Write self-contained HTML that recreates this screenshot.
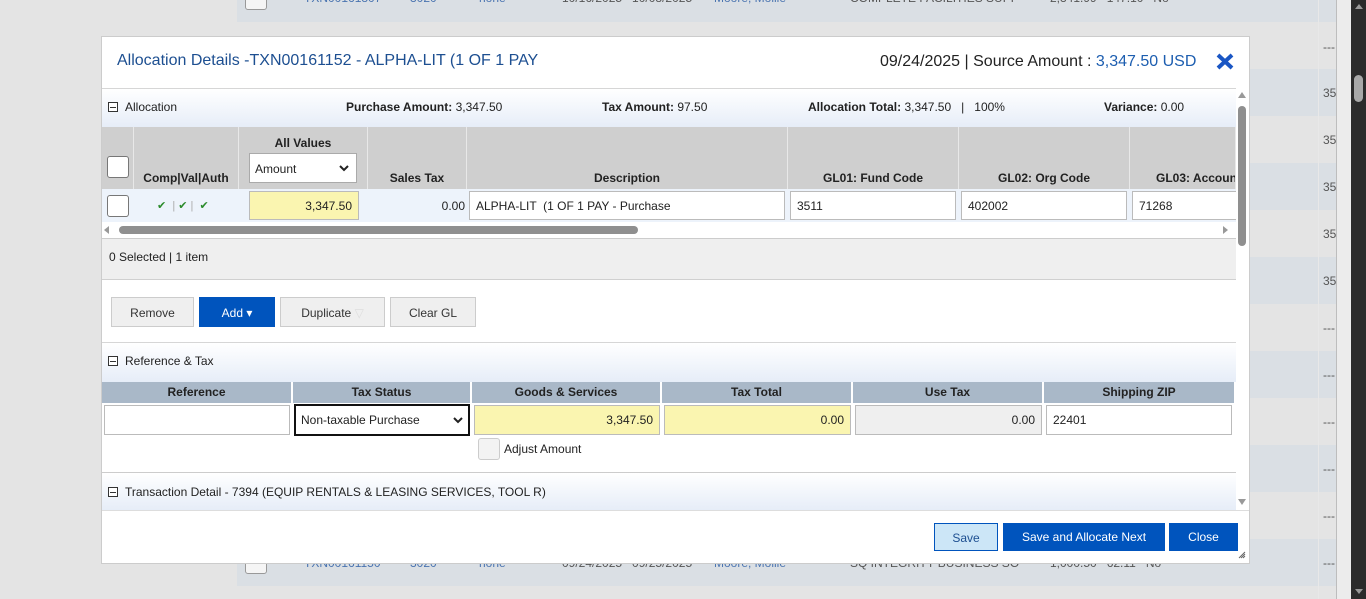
<!DOCTYPE html>
<html><head><meta charset="utf-8"><style>
*{box-sizing:border-box;margin:0;padding:0}
body{width:1366px;height:599px;overflow:hidden;background:#e4e4e4;font-family:"Liberation Sans",Arial,sans-serif;font-size:12px;color:#222;position:relative}
.a{position:absolute}
.row{position:absolute;left:237px;width:1099px;height:47px;background:#dadfe4}
.bgt{position:absolute;font-size:12px;color:#555;white-space:nowrap}
.lnk{color:#4a74b0}
.hdr{background:linear-gradient(#fff,#e6edf8);border-top:1px solid #d6d6d6}
.box{position:absolute;background:#fff;border:1px solid #bbb;height:29px;font-size:12px;padding:7px 6px;white-space:nowrap;overflow:hidden}
.yel{background:#faf5b0;text-align:right}
.th{position:absolute;background:#cfcfcf;font-weight:bold;text-align:center;font-size:12px;border-right:1px solid #e8e8e8}
.th2{position:absolute;top:382px;height:21px;background:#a9b8c8;font-weight:bold;text-align:center;padding-top:3px;border-right:2px solid #fff}
.btn{position:absolute;top:297px;height:30px;border:1px solid #ccc;background:#efefef;text-align:center;padding-top:8px;color:#333}
.minus{position:absolute;width:10px;height:10px;border:1px solid #333;background:#fff}
.minus:after{content:"";position:absolute;left:1px;top:3.5px;width:6px;height:1px;background:#333}
.chev{position:absolute;right:7px;top:11px}
</style></head><body>
<div class="row" style="top:-25px"></div>
<div class="row" style="top:69px"></div>
<div class="row" style="top:163px"></div>
<div class="row" style="top:257px"></div>
<div class="row" style="top:351px"></div>
<div class="row" style="top:445px"></div>
<div class="row" style="top:539px"></div>
<div class="a" style="left:1318px;top:0;width:1px;height:599px;background:#e8e8e8"></div>
<div class="a" style="left:1336px;top:0;width:1px;height:599px;background:#bdbdbd"></div>
<div class="a" style="left:1337px;top:0;width:14px;height:599px;background:#ececec"></div>
<div class="a" style="left:1351px;top:0;width:15px;height:599px;background:#2b2b2b"></div>
<div class="a" style="left:1354px;top:75px;width:9px;height:27px;border-radius:5px;background:#a8a8a8"></div>
<div class="a" style="left:1355px;top:4px;border-left:4px solid transparent;border-right:4px solid transparent;border-bottom:5px solid #999"></div>
<div class="a" style="left:1355px;top:589px;border-left:4px solid transparent;border-right:4px solid transparent;border-top:5px solid #999"></div>
<div class="a" style="left:245px;top:-10px;width:22px;height:20px;border:1px solid #999;border-radius:3px;background:#f5f5f5"></div>
<div class="a" style="left:245px;top:552px;width:22px;height:22px;border:1px solid #999;border-radius:3px;background:#f5f5f5"></div>
<div class="bgt lnk" style="left:304px;top:-9px">TXN00161807</div><div class="bgt lnk" style="left:410px;top:-9px">3020</div><div class="bgt lnk" style="left:479px;top:-9px">none</div><div class="bgt" style="left:562px;top:-9px">10/16/2025 &nbsp; 10/08/2025</div><div class="bgt lnk" style="left:714px;top:-9px">Moore, Mollie</div><div class="bgt" style="left:850px;top:-9px">COMPLETE FACILITIES SUPP</div><div class="bgt" style="left:1050px;top:-9px">2,341.99 &nbsp; 147.10 &nbsp; No</div>
<div class="bgt lnk" style="left:304px;top:556px">TXN00161150</div><div class="bgt lnk" style="left:410px;top:556px">3020</div><div class="bgt lnk" style="left:479px;top:556px">none</div><div class="bgt" style="left:562px;top:556px">09/24/2025 &nbsp; 09/25/2025</div><div class="bgt lnk" style="left:714px;top:556px">Moore, Mollie</div><div class="bgt" style="left:850px;top:556px">SQ INTEGRITY BUSINESS SO</div><div class="bgt" style="left:1050px;top:556px">1,000.50 &nbsp; 62.11 &nbsp; No</div>
<div class="bgt" style="left:1323px;top:40px">---</div>
<div class="bgt" style="left:1323px;top:86px">35</div><div class="bgt" style="left:1323px;top:133px">35</div><div class="bgt" style="left:1323px;top:180px">35</div><div class="bgt" style="left:1323px;top:227px">35</div><div class="bgt" style="left:1323px;top:274px">35</div>
<div class="bgt" style="left:1323px;top:321px">---</div><div class="bgt" style="left:1323px;top:368px">---</div><div class="bgt" style="left:1323px;top:415px">---</div><div class="bgt" style="left:1323px;top:462px">---</div><div class="bgt" style="left:1323px;top:509px">---</div><div class="bgt" style="left:1323px;top:556px">---</div>

<div class="a" style="left:101px;top:36px;width:1149px;height:528px;background:#fff;border:1px solid #ccc"></div>
<div class="a" style="left:117px;top:52px;font-size:16px;color:#1d4f91">Allocation Details -TXN00161152 - ALPHA-LIT (1 OF 1 PAY</div>
<div class="a" style="left:880px;top:53px;font-size:16px;color:#222">09/24/2025 | Source Amount : <span style="color:#1d5eb0">3,347.50 USD</span></div>
<svg class="a" style="left:1216px;top:53px" width="18" height="17" viewBox="0 0 18 17"><path d="M2 2L16 15M16 2L2 15" stroke="#1a56c4" stroke-width="4"/></svg>

<div class="a hdr" style="left:102px;top:88px;width:1134px;height:39px"></div>
<div class="minus" style="left:108px;top:102px"></div>
<div class="a" style="left:125px;top:100px">Allocation</div>
<div class="a" style="left:346px;top:100px"><b>Purchase Amount:</b> 3,347.50</div>
<div class="a" style="left:602px;top:100px"><b>Tax Amount:</b> 97.50</div>
<div class="a" style="left:808px;top:100px"><b>Allocation Total:</b> 3,347.50 &nbsp; | &nbsp; 100%</div>
<div class="a" style="left:1104px;top:100px"><b>Variance:</b> 0.00</div>

<div class="th" style="left:102px;top:127px;width:32px;height:62px"></div>
<div class="a" style="left:107px;top:156px;width:22px;height:22px;border:1px solid #777;border-radius:3px;background:#fff"></div>
<div class="th" style="left:134px;top:127px;width:105px;height:62px;padding-top:44px">Comp|Val|Auth</div>
<div class="th" style="left:239px;top:127px;width:129px;height:62px;padding-top:9px">All Values</div>
<div class="a" style="left:249px;top:153px;width:108px;height:30px;background:#fff;border:1px solid #aaa;padding:8px 5px">Amount<svg class="chev" width="10" height="7"><path d="M1 1L5 5L9 1" stroke="#222" stroke-width="2" fill="none"/></svg></div>
<div class="th" style="left:368px;top:127px;width:99px;height:62px;padding-top:44px">Sales Tax</div>
<div class="th" style="left:467px;top:127px;width:321px;height:62px;padding-top:44px">Description</div>
<div class="th" style="left:788px;top:127px;width:171px;height:62px;padding-top:44px">GL01: Fund Code</div>
<div class="th" style="left:959px;top:127px;width:171px;height:62px;padding-top:44px">GL02: Org Code</div>
<div class="th" style="left:1130px;top:127px;width:106px;height:62px;padding-top:44px;text-align:left;padding-left:26px;white-space:nowrap;overflow:hidden">GL03: Account</div>

<div class="a" style="left:102px;top:189px;width:1134px;height:33px;background:#edf3fb"></div>
<div class="a" style="left:107px;top:195px;width:22px;height:22px;border:1px solid #777;border-radius:3px;background:#fff"></div>
<div class="a" style="left:157px;top:199px;font-size:11px;color:#2a8a2a">✔ <span style="color:#aaa">&nbsp;|</span> ✔ <span style="color:#aaa">|</span> &nbsp;✔</div>
<div class="box yel" style="left:249px;top:191px;width:110px">3,347.50</div>
<div class="a" style="left:368px;top:199px;width:97px;text-align:right">0.00</div>
<div class="box" style="left:469px;top:191px;width:316px">ALPHA-LIT &nbsp;(1 OF 1 PAY - Purchase</div>
<div class="box" style="left:790px;top:191px;width:166px">3511</div>
<div class="box" style="left:961px;top:191px;width:166px">402002</div>
<div class="box" style="left:1132px;top:191px;width:110px;border-right:none">71268</div>
<div class="a" style="left:102px;top:222px;width:1134px;height:16px;background:#fff"></div>
<div class="a" style="left:104px;top:226px;border-top:4px solid transparent;border-bottom:4px solid transparent;border-right:5px solid #999"></div>
<div class="a" style="left:1223px;top:226px;border-top:4px solid transparent;border-bottom:4px solid transparent;border-left:5px solid #999"></div>
<div class="a" style="left:119px;top:226px;width:519px;height:8px;border-radius:4px;background:#8f8f8f"></div>
<div class="a" style="left:102px;top:238px;width:1134px;height:42px;background:#efefef;border-top:1px solid #ccc;border-bottom:1px solid #d0d0d0"></div>
<div class="a" style="left:109px;top:250px">0 Selected | 1 item</div>

<div class="btn" style="left:111px;width:83px">Remove</div>
<div class="btn" style="left:199px;width:76px;background:#0054bd;border-color:#0054bd;color:#fff">Add ▾</div>
<div class="btn" style="left:280px;width:105px">Duplicate <span style="color:#ddd">▽</span></div>
<div class="btn" style="left:390px;width:86px">Clear GL</div>

<div class="a hdr" style="left:102px;top:342px;width:1134px;height:40px"></div>
<div class="minus" style="left:108px;top:356px"></div>
<div class="a" style="left:125px;top:354px">Reference &amp; Tax</div>
<div class="th2" style="left:102px;width:191px">Reference</div>
<div class="th2" style="left:293px;width:179px">Tax Status</div>
<div class="th2" style="left:472px;width:190px">Goods &amp; Services</div>
<div class="th2" style="left:662px;width:191px">Tax Total</div>
<div class="th2" style="left:853px;width:191px">Use Tax</div>
<div class="th2" style="left:1044px;width:192px">Shipping ZIP</div>
<div class="box" style="left:104px;top:405px;width:186px;height:30px"></div>
<div class="box" style="left:294px;top:404px;width:176px;height:32px;border:2px solid #111;padding:7px 5px">Non-taxable Purchase<svg class="chev" width="10" height="7" style="top:11px;right:5px"><path d="M1 1L5 5L9 1" stroke="#222" stroke-width="2" fill="none"/></svg></div>
<div class="box yel" style="left:474px;top:405px;width:186px;height:30px">3,347.50</div>
<div class="box yel" style="left:664px;top:405px;width:187px;height:30px">0.00</div>
<div class="box" style="left:855px;top:405px;width:187px;height:30px;background:#efefef;text-align:right">0.00</div>
<div class="box" style="left:1046px;top:405px;width:186px;height:30px">22401</div>
<div class="a" style="left:478px;top:438px;width:22px;height:22px;border:1px solid #ccc;border-radius:3px;background:#f3f3f3"></div>
<div class="a" style="left:504px;top:442px">Adjust Amount</div>
<div class="a" style="left:102px;top:472px;width:1134px;height:1px;background:#ccc"></div>

<div class="a hdr" style="left:102px;top:473px;width:1134px;height:37px;border-top:none"></div>
<div class="minus" style="left:108px;top:487px"></div>
<div class="a" style="left:125px;top:485px">Transaction Detail - 7394 (EQUIP RENTALS &amp; LEASING SERVICES, TOOL R)</div>

<div class="a" style="left:1236px;top:88px;width:13px;height:422px;background:#fff"></div>
<div class="a" style="left:1238px;top:92px;border-left:4px solid transparent;border-right:4px solid transparent;border-bottom:6px solid #999"></div>
<div class="a" style="left:1238px;top:499px;border-left:4px solid transparent;border-right:4px solid transparent;border-top:6px solid #999"></div>
<div class="a" style="left:1238px;top:106px;width:8px;height:140px;border-radius:4px;background:#8f8f8f"></div>
<div class="a" style="left:102px;top:510px;width:1147px;height:1px;background:#ddd"></div>

<div class="a" style="left:934px;top:523px;width:64px;height:28px;border:1px solid #0054bd;background:#cce6f7;color:#1d4f91;text-align:center;padding-top:7px">Save</div>
<div class="a" style="left:1003px;top:523px;width:162px;height:28px;background:#0054bd;color:#fff;text-align:center;padding-top:7px">Save and Allocate Next</div>
<div class="a" style="left:1169px;top:523px;width:69px;height:28px;background:#0054bd;color:#fff;text-align:center;padding-top:7px">Close</div>
<svg class="a" style="left:1238px;top:551px" width="8" height="8"><path d="M7 1L1 7M7 3L3 7M7 5L5 7" stroke="#666" stroke-width="1"/></svg>
</body></html>
